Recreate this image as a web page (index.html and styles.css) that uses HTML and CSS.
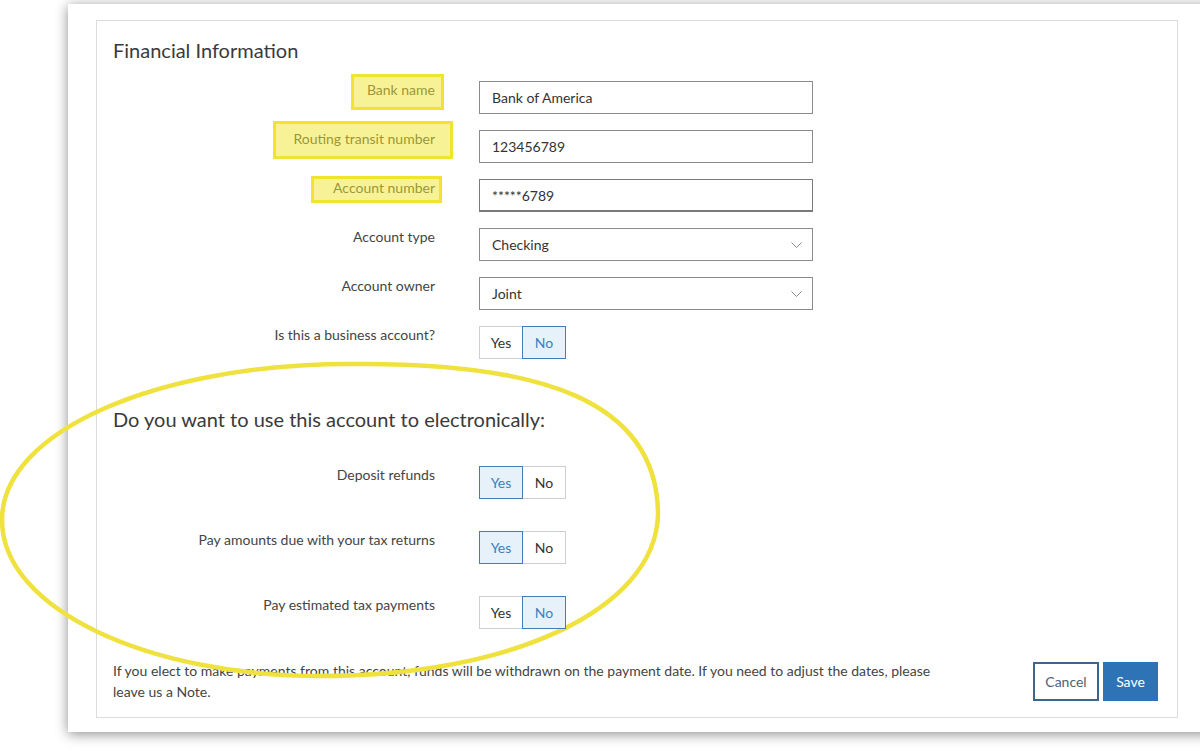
FILE: index.html
```html
<!DOCTYPE html>
<html lang="en">
<head>
<meta charset="utf-8">
<title>Financial Information</title>
<link rel="stylesheet" href="styles.css">
</head>
<body>
<div class="window">
  <section class="panel">
    <h2 class="panel-title">Financial Information</h2>

    <div class="form-grid">
      <div class="field-label"><span class="mark mark-bank">Bank name</span></div>
      <div class="text-input">Bank of America</div>

      <div class="field-label"><span class="mark mark-routing">Routing transit number</span></div>
      <div class="text-input">123456789</div>

      <div class="field-label"><span class="mark mark-account">Account number</span></div>
      <div class="text-input text-input-active">*****6789</div>

      <div class="field-label">Account type</div>
      <div class="text-input select">
        <span>Checking</span>
        <svg class="chevron" width="11" height="6" viewBox="0 0 11 6"><polyline points="0.5,0.5 5.5,5.5 10.5,0.5"/></svg>
      </div>

      <div class="field-label">Account owner</div>
      <div class="text-input select">
        <span>Joint</span>
        <svg class="chevron" width="11" height="6" viewBox="0 0 11 6"><polyline points="0.5,0.5 5.5,5.5 10.5,0.5"/></svg>
      </div>

      <div class="field-label">Is this a business account?</div>
      <div class="toggle">
        <span class="toggle-opt">Yes</span>
        <span class="toggle-opt is-on">No</span>
      </div>
    </div>

    <h2 class="section-title">Do you want to use this account to electronically:</h2>

    <div class="form-grid form-grid-loose">
      <div class="field-label">Deposit refunds</div>
      <div class="toggle">
        <span class="toggle-opt is-on">Yes</span>
        <span class="toggle-opt">No</span>
      </div>

      <div class="field-label">Pay amounts due with your tax returns</div>
      <div class="toggle">
        <span class="toggle-opt is-on">Yes</span>
        <span class="toggle-opt">No</span>
      </div>

      <div class="field-label">Pay estimated tax payments</div>
      <div class="toggle">
        <span class="toggle-opt">Yes</span>
        <span class="toggle-opt is-on">No</span>
      </div>
    </div>

    <div class="panel-footer">
      <p class="note">If you elect to make payments from this account, funds will be withdrawn on the payment date. If you need to adjust the dates, please<br>leave us a Note.</p>
      <div class="actions">
        <button class="btn btn-outline" type="button">Cancel</button>
        <button class="btn btn-primary" type="button">Save</button>
      </div>
    </div>
  </section>
</div>

<!-- hand-drawn ring around the e-payment questions -->
<svg class="ring" width="1200" height="751" viewBox="0 0 1200 751">
  <path d="M 2,520 C 2,430 160,364 350,364 C 540,362 658,400 658,515 C 655,610 510,676 320,676 C 150,676 2,610 2,520 Z"/>
</svg>
</body>
</html>
```

FILE: styles.css
```css
html, body {
  margin: 0;
  padding: 0;
  overflow: hidden;
  background: #ffffff;
}

body {
  width: 1200px;
  height: 751px;
  position: relative;
  font-family: "Lato", "Open Sans", sans-serif;
  color: #444444;
}

/* outer window */
.window {
  margin: 4px 0 0 68px;
  width: 1160px;
  height: 728px;
  background: #ffffff;
  box-shadow: 0 2px 12px rgba(0, 0, 0, 0.45);
  padding: 16px 0 0 28px;
  box-sizing: border-box;
}

/* bordered form panel */
.panel {
  width: 1082px;
  box-sizing: border-box;
  border: 1px solid #dcdcdc;
  padding: 17px 19px 15px 16px;
  background: #ffffff;
}

.panel-title,
.section-title {
  margin: 0;
  font-size: 20px;
  line-height: 24px;
  font-weight: 400;
  color: #3a3a3a;
}

.section-title {
  margin-top: 48px;
}

.form-grid {
  display: grid;
  grid-template-columns: 322px 334px;
  column-gap: 44px;
  row-gap: 16px;
  margin-top: 19px;
}

.form-grid-loose {
  row-gap: 32px;
  margin-top: 35px;
}

.field-label {
  text-align: right;
  font-size: 14px;
  line-height: 16px;
  padding-top: 1px;
  color: #444444;
}

/* highlighter boxes drawn over the key labels */
.mark {
  position: relative;
  display: inline-block;
}

.mark::after {
  content: "";
  position: absolute;
  background: rgba(242, 229, 45, 0.5);
  border: 3px solid rgba(240, 226, 40, 0.92);
  box-sizing: border-box;
}

.mark-bank::after {
  left: -16px;
  right: -9px;
  top: -8px;
  bottom: -12px;
}

.mark-routing::after {
  left: -20px;
  right: -18px;
  top: -10px;
  bottom: -12px;
}

.mark-account::after {
  left: -22px;
  right: -7px;
  top: -4px;
  bottom: -7px;
}

.text-input {
  height: 33px;
  box-sizing: border-box;
  border: 1px solid #8c8c8c;
  padding: 0 12px;
  display: flex;
  align-items: center;
  font-size: 14px;
  color: #333333;
  background: #ffffff;
}

.text-input-active {
  border-color: #7a7a7a;
  border-bottom-width: 2px;
}

.select {
  justify-content: space-between;
  padding-right: 10px;
}

.chevron polyline {
  fill: none;
  stroke: #8a8a8a;
  stroke-width: 1;
}

/* yes / no segmented toggle */
.toggle {
  display: flex;
  height: 33px;
}

.toggle-opt {
  width: 44px;
  height: 33px;
  box-sizing: border-box;
  border: 1px solid #cfcfcf;
  display: flex;
  align-items: center;
  justify-content: center;
  font-size: 14px;
  color: #333333;
  background: #ffffff;
  position: relative;
}

.toggle-opt + .toggle-opt {
  margin-left: -1px;
}

.toggle-opt.is-on {
  background: #e7f1fa;
  border-color: #3f7dbd;
  color: #3b7fc1;
  z-index: 1;
}

.panel-footer {
  display: flex;
  justify-content: space-between;
  align-items: flex-start;
  margin-top: 31px;
}

.note {
  margin: 0;
  font-size: 14px;
  line-height: 21px;
  color: #444444;
}

.actions {
  display: flex;
  gap: 4px;
  margin-top: 2px;
}

.btn {
  height: 39px;
  box-sizing: border-box;
  font-family: inherit;
  font-size: 14px;
  padding: 0;
  cursor: pointer;
}

.btn-outline {
  width: 66px;
  border: 2px solid #3c6690;
  background: #ffffff;
  color: #4e6276;
}

.btn-primary {
  width: 55px;
  border: 0;
  background: #2f73b7;
  color: #ffffff;
}

.ring {
  position: absolute;
  left: 0;
  top: 0;
  pointer-events: none;
}

.ring path {
  fill: none;
  stroke: #f0e23e;
  stroke-width: 4.5;
}
```
